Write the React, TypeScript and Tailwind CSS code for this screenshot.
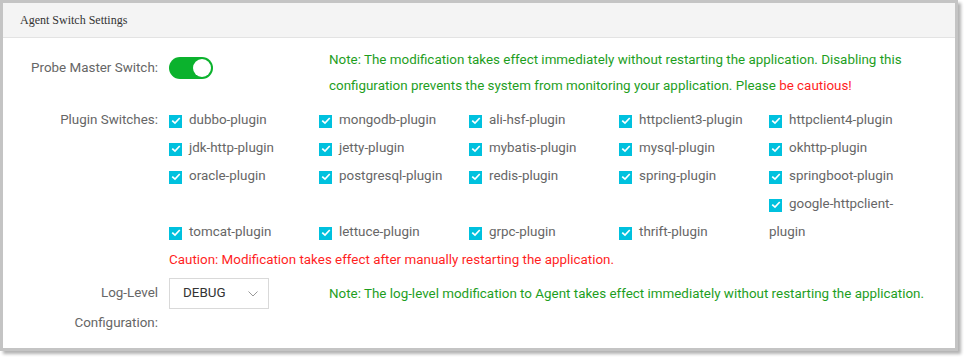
const plugins = [
  'dubbo-plugin',
  'mongodb-plugin',
  'ali-hsf-plugin',
  'httpclient3-plugin',
  'httpclient4-plugin',
  'jdk-http-plugin',
  'jetty-plugin',
  'mybatis-plugin',
  'mysql-plugin',
  'okhttp-plugin',
  'oracle-plugin',
  'postgresql-plugin',
  'redis-plugin',
  'spring-plugin',
  'springboot-plugin',
  'google-httpclient-plugin',
  'tomcat-plugin',
  'lettuce-plugin',
  'grpc-plugin',
  'thrift-plugin',
];

function CheckBox() {
  return (
    <span className="mr-[7px] inline-flex h-[13px] w-[13px] translate-y-[1px] items-center justify-center bg-[#00c1de] align-[-1px]">
      <svg viewBox="0 0 12 12" className="h-[10px] w-[10px]" fill="none">
        <path d="M2.2 6.2 4.8 8.6 9.8 3.2" stroke="#fff" strokeWidth="2" strokeLinecap="square" />
      </svg>
    </span>
  );
}

function PluginItem({ name }: { name: string }) {
  const isLong = name === 'google-httpclient-plugin';
  return (
    <div className={isLong ? 'col-start-5 row-span-2 pr-[20px]' : ''}>
      <CheckBox />
      <span>{name}</span>
    </div>
  );
}

export default function App() {
  return (
    <div className="h-[363px] w-[968px] bg-white font-['Roboto',sans-serif] text-[13.4px] text-[#666]">
      <div className="h-[351px] w-[958px] border-[3px] border-[#c4c4c4] bg-white shadow-[3px_3px_3px_rgba(0,0,0,0.3)]">
        <div className="flex h-[35px] items-center border-b border-[#e3e3e3] bg-[#f4f4f4] pl-[17px] font-['Liberation_Serif',serif] text-[12px] text-[#333]">
          Agent Switch Settings
        </div>

        <div className="pt-[9px]">
          {/* master switch */}
          <div className="flex items-start">
            <div className="mt-[10px] w-[166px] shrink-0 pr-[11px] text-right leading-[22px]">Probe Master Switch:</div>
            <div className="mt-[10px] w-[160px] shrink-0">
              <div className="relative h-[22px] w-[44px] rounded-full bg-[#0bb22d]">
                <span className="absolute top-[2px] right-[2px] h-[18px] w-[18px] rounded-full bg-white" />
              </div>
            </div>
            <div className="flex-1 pr-[12px] leading-[26px] text-[#1e9e1e]">
              Note: The modification takes effect immediately without restarting the application. Disabling this
              configuration prevents the system from monitoring your application. Please{' '}
              <span className="text-[#ff1f1f]">be cautious!</span>
            </div>
          </div>

          {/* plugins */}
          <div className="mt-[7px] flex items-start leading-[28px]">
            <div className="w-[166px] shrink-0 pr-[11px] text-right">Plugin Switches:</div>
            <div>
              <div className="grid grid-cols-[repeat(5,150px)]">
                {plugins.map(p => (
                  <PluginItem key={p} name={p} />
                ))}
              </div>
              <div className="text-[#ff1f1f]">
                Caution: Modification takes effect after manually restarting the application.
              </div>
            </div>
          </div>

          {/* log level */}
          <div className="mt-[4px] flex items-start">
            <div className="w-[166px] shrink-0 pl-[25px] pr-[11px] text-right leading-[30px]">Log-Level Configuration:</div>
            <div className="w-[160px] shrink-0">
              <div className="flex h-[31px] w-[100px] items-center justify-between border border-[#d9d9d9] pr-[10px] pl-[13px] text-[#333]">
                <span>DEBUG</span>
                <svg viewBox="0 0 10 6" className="h-[6px] w-[10px]" fill="none">
                  <path d="M0.5 0.5 5 5 9.5 0.5" stroke="#999" strokeWidth="1" />
                </svg>
              </div>
            </div>
            <div className="leading-[31px] text-[#1e9e1e]">
              Note: The log-level modification to Agent takes effect immediately without restarting the application.
            </div>
          </div>
        </div>
      </div>
    </div>
  );
}
